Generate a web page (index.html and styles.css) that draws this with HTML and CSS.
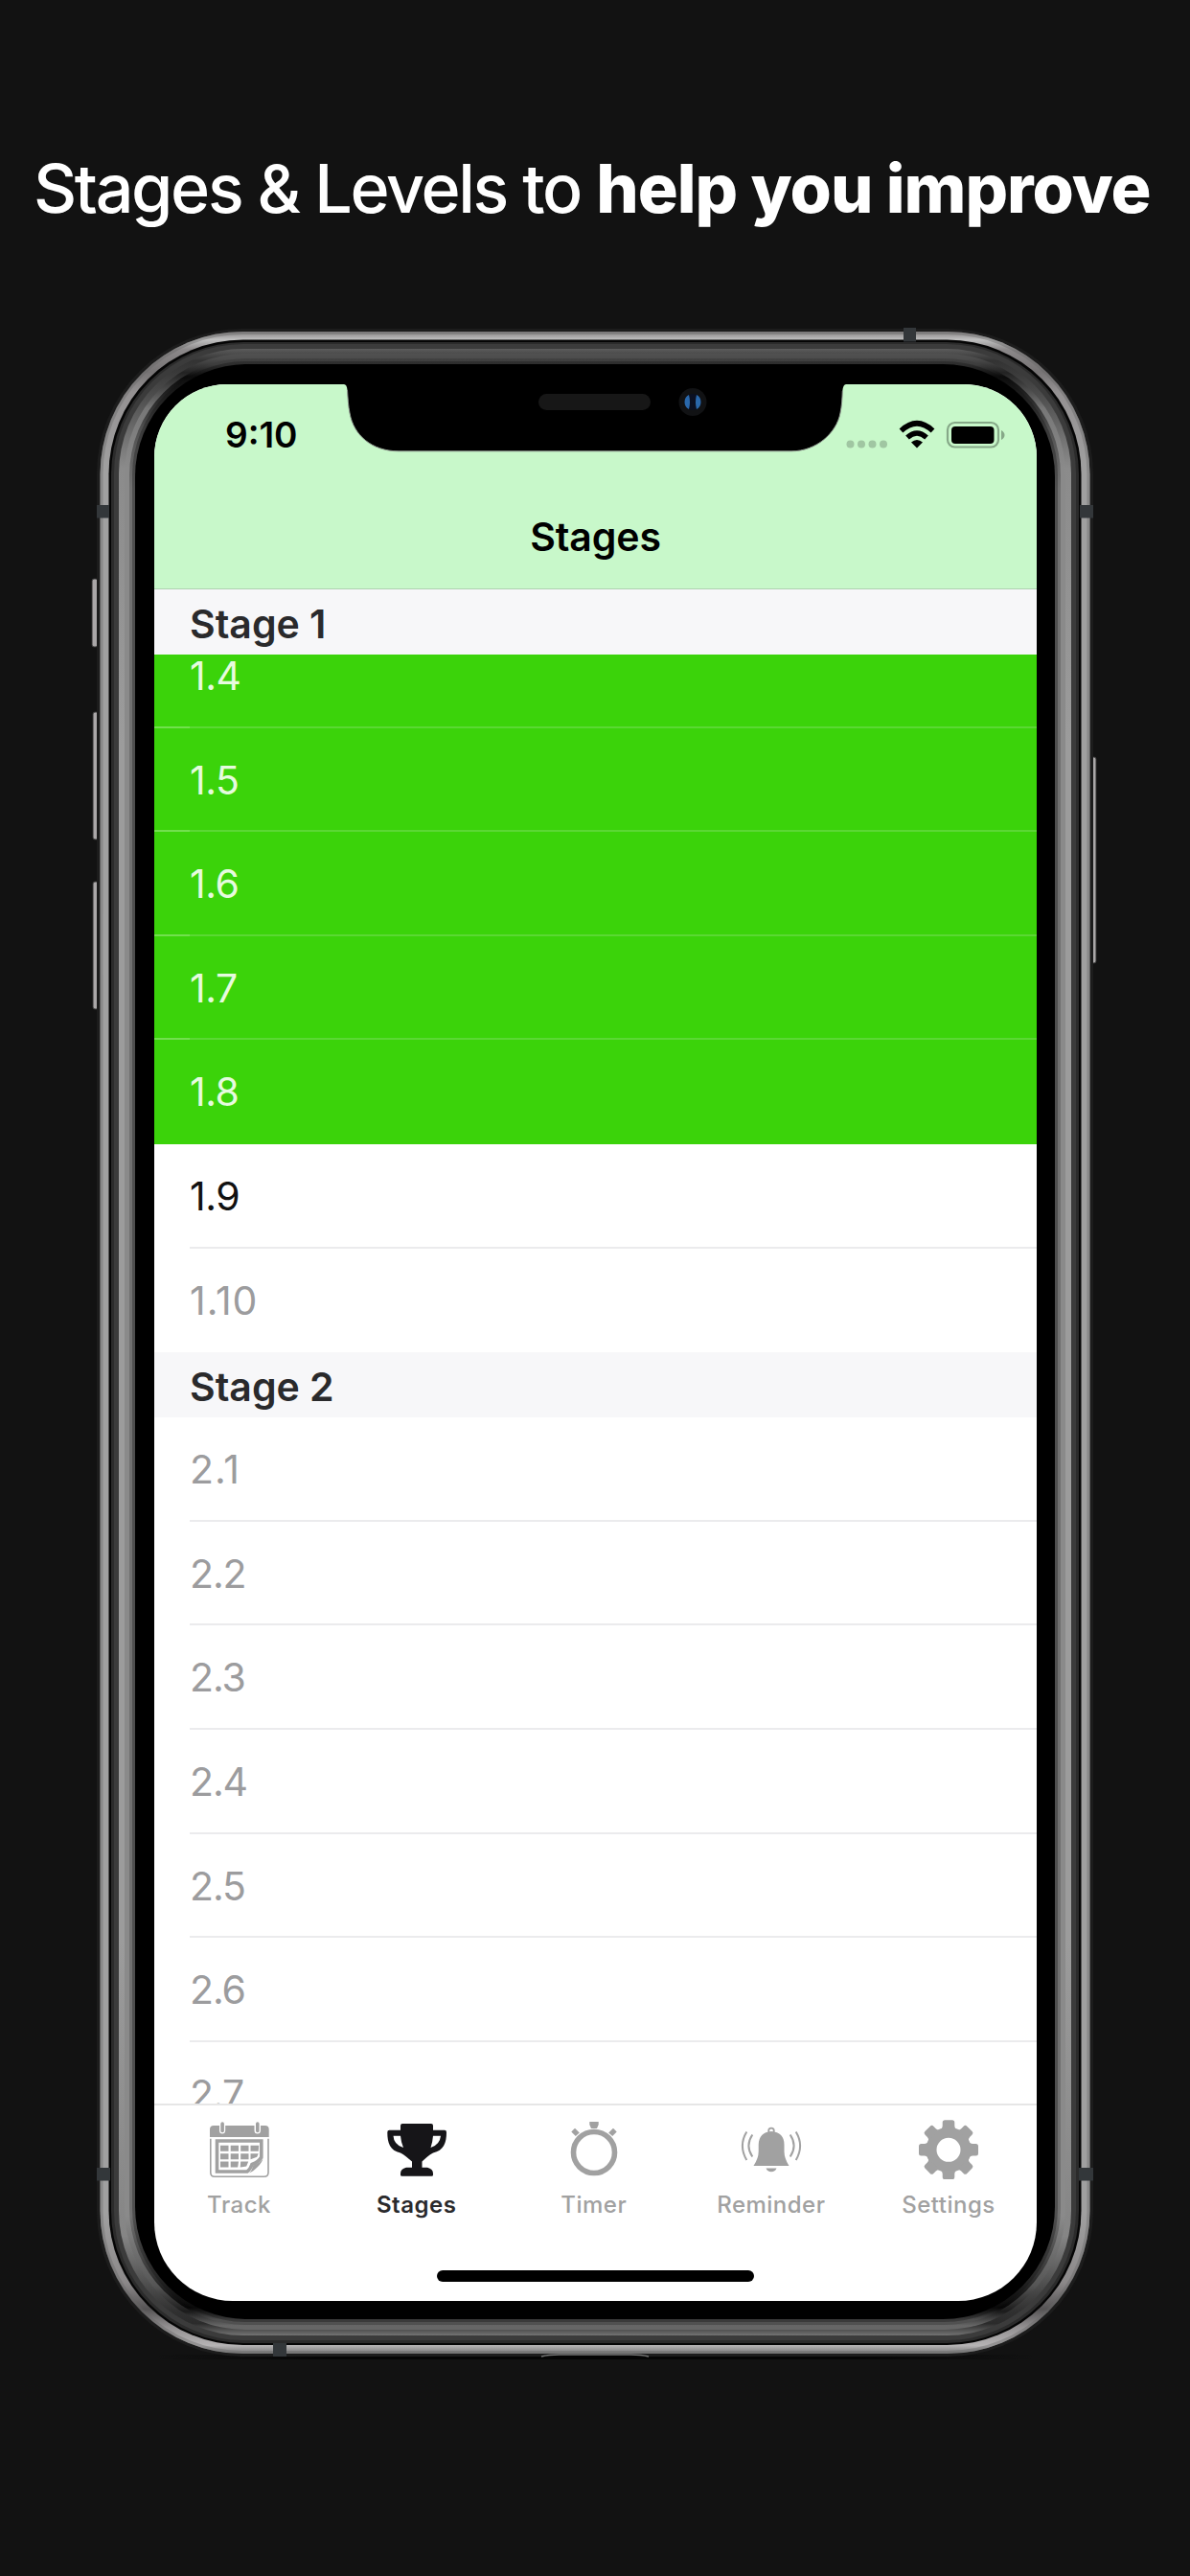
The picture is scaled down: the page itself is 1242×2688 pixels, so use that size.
FILE: index.html
```html
<!DOCTYPE html>
<html lang="en">
<head>
<meta charset="utf-8">
<title>Stages</title>
<link rel="stylesheet" href="styles.css">
</head>
<body>
<h1 class="headline"><span class="lead">Stages &amp; Levels to</span> <strong>help you improve</strong></h1>
<main class="phone">
  <svg class="frame" viewBox="94 340 1054 2124" aria-hidden="true">
    <defs>
      <linearGradient id="metal" gradientUnits="userSpaceOnUse" x1="0" y1="346" x2="0" y2="2456">
        <stop offset="0" stop-color="#858283"/><stop offset=".004" stop-color="#c0c0c0"/>
        <stop offset=".009" stop-color="#8b8889"/><stop offset=".02" stop-color="#777475"/><stop offset=".03" stop-color="#949192"/>
        <stop offset=".07" stop-color="#a0a0a0"/><stop offset=".93" stop-color="#a0a0a0"/>
        <stop offset=".965" stop-color="#8b8889"/><stop offset=".978" stop-color="#565455"/><stop offset=".987" stop-color="#949192"/>
        <stop offset=".996" stop-color="#b5b3b4"/><stop offset="1" stop-color="#777"/>
      </linearGradient>
      <linearGradient id="b1" gradientUnits="userSpaceOnUse" x1="0" y1="364" x2="0" y2="2437">
        <stop offset="0" stop-color="#5c5c5c"/><stop offset=".006" stop-color="#333"/><stop offset=".012" stop-color="#3a3a3a"/><stop offset=".06" stop-color="#8b8b8b"/>
        <stop offset=".2" stop-color="#9c9c9c"/><stop offset=".8" stop-color="#9c9c9c"/><stop offset=".95" stop-color="#858585"/><stop offset=".988" stop-color="#303030"/><stop offset=".994" stop-color="#2b2b2b"/><stop offset="1" stop-color="#737373"/>
      </linearGradient>
      <linearGradient id="b2" gradientUnits="userSpaceOnUse" x1="0" y1="364" x2="0" y2="2437">
        <stop offset="0" stop-color="#555"/><stop offset=".005" stop-color="#4c4c4c"/><stop offset=".012" stop-color="#222"/><stop offset=".03" stop-color="#777"/><stop offset=".06" stop-color="#8a8a8a"/>
        <stop offset=".94" stop-color="#8a8a8a"/><stop offset=".975" stop-color="#555"/><stop offset=".988" stop-color="#1b1b1b"/><stop offset=".995" stop-color="#666"/><stop offset="1" stop-color="#666"/>
      </linearGradient>
      <linearGradient id="b3" gradientUnits="userSpaceOnUse" x1="0" y1="364" x2="0" y2="2437">
        <stop offset="0" stop-color="#484848"/><stop offset=".008" stop-color="#3d3d3d"/><stop offset=".014" stop-color="#0a0a0a"/><stop offset=".04" stop-color="#505050"/><stop offset=".07" stop-color="#707070"/>
        <stop offset=".94" stop-color="#707070"/><stop offset=".97" stop-color="#333"/><stop offset=".986" stop-color="#050505"/><stop offset=".992" stop-color="#505050"/><stop offset="1" stop-color="#505050"/>
      </linearGradient>
      <linearGradient id="shade"><stop offset="0" stop-color="#050505" stop-opacity="0"/><stop offset=".2" stop-color="#050505"/><stop offset=".8" stop-color="#050505"/><stop offset="1" stop-color="#050505" stop-opacity="0"/></linearGradient>
    </defs>
    <g fill="#aaa7a8" stroke="#333" stroke-width="1">
      <rect x="96" y="604" width="6" height="71" rx="2"/><rect x="97" y="743" width="6" height="133" rx="2"/>
      <rect x="97" y="920" width="6" height="133" rx="2"/><rect x="1138" y="790" width="6" height="215" rx="2"/>
    </g>
    <rect x="160" y="2457" width="922" height="5" fill="url(#shade)"/>
    <rect x="101" y="343" width="1040" height="2116" rx="152" fill="#1c1c1c"/>
    <rect x="104.5" y="346" width="1033" height="2110" rx="149" fill="url(#metal)"/>
    <rect x="106" y="347.500" width="1030" height="2107" rx="147" fill="none" stroke="#666" stroke-opacity=".4" stroke-width="3"/>
    <rect x="113.500" y="354.500" width="1015" height="2092.500" rx="140" fill="#050505"/>
    <rect x="116" y="357" width="1010" height="2088" rx="138" fill="#2b2b2b"/>
    <rect x="119" y="359" width="1004" height="2083" rx="135" fill="#3b3b3b"/>
    <rect x="124" y="364" width="994" height="2073" rx="130" fill="url(#b1)"/>
    <rect x="130" y="369" width="982" height="2062" rx="126" fill="url(#b2)"/>
    <rect x="135" y="374" width="972" height="2052" rx="122" fill="url(#b3)"/>
    <rect x="138" y="377" width="966" height="2046" rx="119" fill="#111" fill-opacity=".35"/>
    <rect x="141" y="380" width="960" height="2040" rx="117" fill="#000"/>
    <g fill="#33373a">
      <path d="M101 527h13v13.500h-13zM1127 527h14v13.500h-14zM101 2262h14v13.500h-14zM1126 2262h15v13.500h-15zM943 342h13v14.500h-13zM285 2445h14v14h-14z"/>
    </g>
    <path d="M565 2459Q572 2456.500 584 2456.500H658Q670 2456.500 677 2459Z" fill="#050505"/>
    <path d="M565 2459Q572 2457 584 2457H658Q670 2457 677 2459" fill="none" stroke="#777" stroke-width="1.500"/>
  </svg>

  <section class="screen">
    <header class="navbar">
      <div class="status">
        <time>9:10</time>
        <svg class="indicators" viewBox="880 438 172 32" aria-hidden="true">
          <g fill="#a0c6a2"><circle cx="887.500" cy="463.500" r="4"/><circle cx="899" cy="463.500" r="4"/><circle cx="910.500" cy="463.500" r="4"/><circle cx="922" cy="463.500" r="4"/></g>
          <g fill="none" stroke="#000" stroke-width="5.500">
            <path d="M940.500 449.500Q957 434 973.500 449.500"/><path d="M947 456.500Q957 447.500 967 456.500"/>
          </g>
          <path d="M951 461.500Q957 456.500 963 461.500L957 467.500Z"/>
          <rect x="989" y="441" width="53" height="25.500" rx="7.500" fill="none" stroke="#86a888" stroke-width="2.200"/>
          <rect x="993" y="445" width="44.500" height="18" rx="4"/>
          <path d="M1045 449Q1048.500 451 1048.500 454T1045 459Z" fill="#86a888"/>
        </svg>
      </div>
      <h2 class="title">Stages</h2>
    </header>
    <div class="list">
      <h3 class="section pinned">Stage 1</h3>
      <ul class="rows first">
        <li class="done">1.4</li><li class="done">1.5</li><li class="done">1.6</li><li class="done">1.7</li><li class="done last">1.8</li>
        <li class="current">1.9</li><li class="last wide">1.10</li>
      </ul>
      <h3 class="section">Stage 2</h3>
      <ul class="rows">
        <li class="wide">2.1</li><li>2.2</li><li>2.3</li><li>2.4</li><li>2.5</li><li>2.6</li><li>2.7</li>
      </ul>
    </div>
    <nav class="tabs">
      <a class="tab">
        <svg viewBox="0 0 64 64"><path d="M1 20V12Q1 8 5 8H11V13Q11 16.500 14 16.500T17.200 13V8H47.500V13Q47.500 16.500 50.700 16.500T54 13V8H58.700Q62.700 8 62.700 12V20Z"/><rect x="12.300" y="4.300" width="3.600" height="11" rx="1.800"/><rect x="49" y="4.300" width="3.600" height="11" rx="1.800"/><path d="M1.800 21.700V57Q1.800 61.300 6 61.300H57.700Q62 61.300 62 57V21.700" fill="none" stroke="currentColor" stroke-width="1.600"/><path d="M8.500 24H54.800V41Q52 46 45 48.500Q43 54 40 56H8.500Z" fill="none" stroke="currentColor" stroke-width="3.600"/><path d="M42 57.500C46 54 45 51 46.500 49.500C49 48 54 47 56.500 42Q56 46 51 51Q46 56 42 57.500Z"/><path d="M12 28.700h8.500v6H12zM22.700 28.700h8.300v6h-8.300zM33.200 28.700h8.300v6h-8.300zM43.500 28.700h8.700l-.5 6h-8.200zM12 37.300h8.500v6H12zM22.700 37.300h8.300v6h-8.300zM33.200 37.300h8.300v6h-8.300zM43.500 37.300h8.200l-1.500 3.500-6.700 2.500zM12 45.500h8.500v6H12zM22.700 45.500h8.300l-.8 6h-7.500zM33.200 45.500h8l-2 5-6.500 1z"/></svg>
        <span>Track</span>
      </a>
      <a class="tab active">
        <svg viewBox="0 0 64 64"><path fill-rule="evenodd" d="M17 6H47Q49 6 49 8V12.700H61Q63 12.700 63 15C63 26 60 34 49 36.500C45 38.500 41 42 37.500 45.500V51.700H43Q49 53 49 58V59.500Q49 60.700 47.500 60.700H16.500Q15 60.700 15 59.500V58Q15 53 21 51.700H27V45.500C23 42 19 38.500 15 36.500C4 34 1.300 26 1.300 15Q1.300 12.700 3.300 12.700H15V8Q15 6 17 6ZM7.500 18.700Q8 28 18 31Q15.500 25 15 18.700ZM49 18.700Q48.500 25 46.500 31Q56 28 57 18.700Z"/></svg>
        <span>Stages</span>
      </a>
      <a class="tab">
        <svg viewBox="0 0 64 64"><circle cx="32" cy="36" r="21.500" fill="none" stroke="currentColor" stroke-width="5.600"/><path d="M27.300 4H36.700V7L35 11H29L27.300 7ZM12 10.800L16.800 15.500 12.800 19 8.300 14.500ZM52 10.800L55.700 14.500 51.200 19 47.200 15.500Z"/></svg>
        <span>Timer</span>
      </a>
      <a class="tab">
        <svg viewBox="0 0 64 64"><circle cx="32" cy="13.500" r="2.800" fill="none" stroke="currentColor" stroke-width="1.800"/><path d="M13.500 50Q18.700 42 18.700 35V28Q19 15 32 14Q45.500 15 45.500 28V35Q45.500 42 50.500 50ZM26.500 52.500H37.500Q36 56.300 32 56.300T26.500 52.500Z"/><g fill="none" stroke="currentColor" stroke-width="2"><path d="M6.300 14.500Q-2.500 29 6.300 44M12.300 17.500Q4.500 29 12.300 40.500M57.700 14.500Q66.500 29 57.700 44M51.700 17.500Q59.500 29 51.700 40.500"/></g></svg>
        <span>Reminder</span>
      </a>
      <a class="tab">
        <svg viewBox="0 0 64 64"><circle cx="32" cy="33.300" r="18" fill="none" stroke="currentColor" stroke-width="11"/><g transform="translate(32 33.300)"><path id="tooth" d="M-8 -21.500Q-6.300 -23 -6.300 -25V-28.500Q-6.300 -31 -3.800 -31H3.800Q6.300 -31 6.300 -28.500V-25Q6.300 -23 8 -21.500Z"/><use href="#tooth" transform="rotate(45)"/><use href="#tooth" transform="rotate(90)"/><use href="#tooth" transform="rotate(135)"/><use href="#tooth" transform="rotate(180)"/><use href="#tooth" transform="rotate(225)"/><use href="#tooth" transform="rotate(270)"/><use href="#tooth" transform="rotate(315)"/></g></svg>
        <span>Settings</span>
      </a>
    </nav>
    <div class="home"></div>
  </section>

  <svg class="notch" viewBox="356 398 532 76" aria-hidden="true">
    <path d="M356 398V401H359Q362 401 362.500 407C363 415 363.500 424 365 431C369 454 388 470.800 416 470.800H826C852 470.800 873 452 877 431C878.500 424 879 416 879.300 408Q880 401 883 401H888V398Z" fill="#000"/>
    <path d="M362.500 407C363 415 363.500 424 365 431C369 454 388 470.800 416 470.800H826C852 470.800 873 452 877 431C878.500 424 879 416 879.300 408" fill="none" stroke="#8c958c"/>
    <rect x="562" y="411" width="117" height="17" rx="8.500" fill="#171717"/>
    <circle cx="723" cy="419.500" r="14.500" fill="#111214"/>
    <circle cx="723" cy="419.500" r="8.500" fill="#0b1022"/>
    <path d="M719 412A8.500 8.500 0 0 0 719 427Q721 419.500 719 412ZM727 412A8.500 8.500 0 0 1 727 427Q725 419.500 727 412Z" fill="#2a68ab"/>
  </svg>
</main>
</body>
</html>
```
FILE: styles.css
```css
* { box-sizing: border-box; }

body {
  margin: 0;
  width: 1242px;
  height: 2688px;
  overflow: hidden;
  background: #121212;
  font-family: Inter, "Liberation Sans", sans-serif;
}

h1, h2, h3, ul { margin: 0; padding: 0; font-weight: 600; }

.headline {
  height: 340px;
  padding: 152px 0 0 35px;
  color: #fff;
  font-size: 70px;
  line-height: 90px;
  font-weight: 450;
  letter-spacing: -2.35px;
  white-space: nowrap;
}
.headline strong { font-weight: 800; letter-spacing: -1px; }

.phone {
  position: relative;
  width: 1054px;
  height: 2124px;
  margin-left: 94px;
  padding: 61px 0 0 67px;
}
.frame { position: absolute; inset: 0; width: 1054px; height: 2124px; }
.notch { position: absolute; left: 262px; top: 58px; width: 532px; height: 76px; }

.screen {
  position: relative;
  display: flex;
  flex-direction: column;
  width: 921px;
  height: 2000px;
  overflow: hidden;
  border-radius: 76px 76px 82px 82px;
  background: #fff;
}

.navbar {
  height: 214px;
  flex: none;
  background: #c8f8ca;
  border-bottom: 1px solid #aed2b0;
}
.status {
  display: flex;
  justify-content: space-between;
  height: 114px;
  padding: 37px 30px 0 74px;
}
.status time { font-size: 37px; line-height: 32px; font-weight: 600; }
.indicators { width: 172px; height: 32px; }
.title { text-align: center; font-size: 41px; line-height: 90px; letter-spacing: -.1px; }

.list { height: 1580px; flex: none; overflow: hidden; }
.section {
  height: 68px;
  padding-left: 37px;
  background: #f7f7f9;
  color: #2a2a2c;
  font-size: 41px;
  line-height: 72px;
}
.pinned { position: relative; z-index: 1; }

.rows { list-style: none; }
.rows.first { margin-top: -32px; }
.rows li {
  height: 108.6px;
  padding-left: 37px;
  color: #9c9c9e;
  font-size: 41px;
  font-weight: 400;
  line-height: 108px;
  letter-spacing: -1.1px;
  background: linear-gradient(#ebebed, #ebebed) 37px 100% / 100% 2px no-repeat;
}
.rows li.done {
  color: #e6fbdf;
  letter-spacing: -.5px;
  background: linear-gradient(90deg, #72e04e 37px, #5bd834 37px) 0 100% / 100% 2px no-repeat #3bd30a;
}
.rows li.current { color: #111; letter-spacing: -.5px; }
.rows li.wide { letter-spacing: 1px; }
.rows li.last { background-size: 0 0; }

.tabs {
  display: grid;
  grid-template-columns: repeat(5, 185.1px);
  height: 155px;
  flex: none;
  margin: 0 -4px;
  padding-top: 13px;
  border-top: 2px solid #e6e6e6;
}
.tab {
  display: flex;
  flex-direction: column;
  align-items: center;
  gap: 11px;
  color: #a1a1a1;
  font-size: 24px;
  line-height: 32px;
  font-weight: 500;
  letter-spacing: .5px;
}
.tab svg { width: 64px; height: 64px; fill: currentColor; }
.tab.active { color: #161518; }
.tab.active span { color: #2a2a2c; font-weight: 600; }

.home { width: 331px; height: 12px; margin: 19px 0 0 295px; border-radius: 6px; background: #000; }
```
